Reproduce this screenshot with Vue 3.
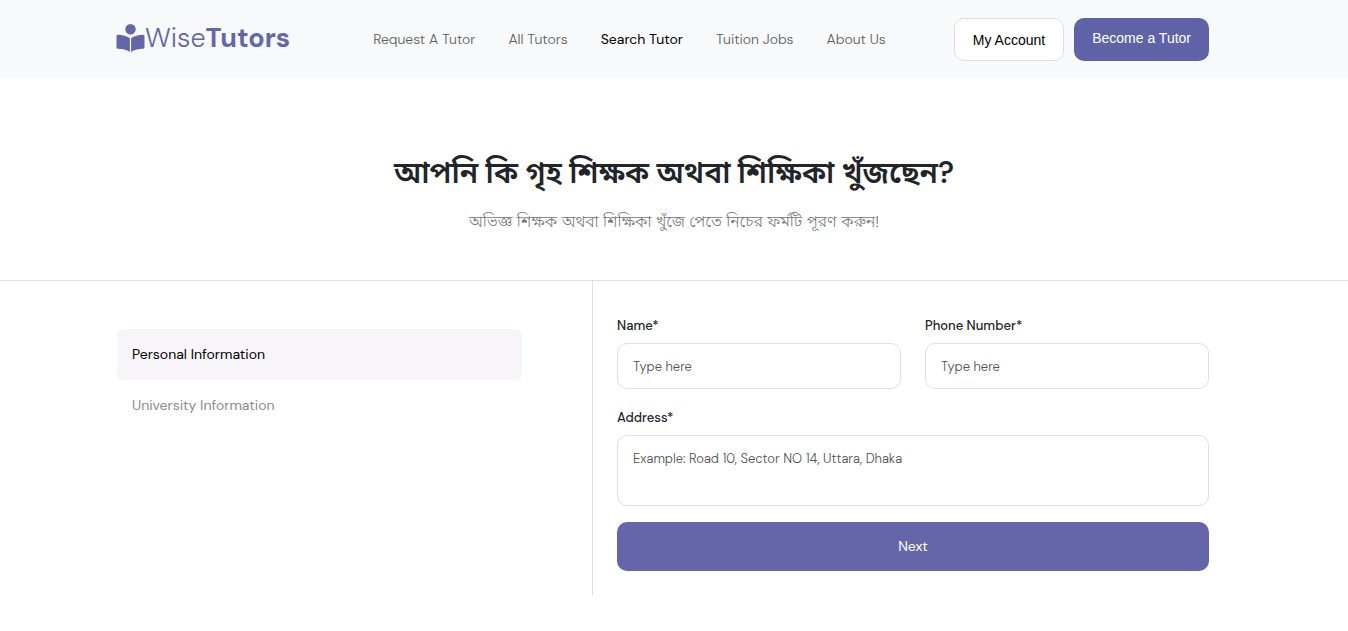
<script setup>
import { ref } from 'vue'

const links = ['Request A Tutor', 'All Tutors', 'Search Tutor', 'Tuition Jobs', 'About Us']
const current = 'Search Tutor'
const steps = ['Personal Information', 'University Information']
const step = ref(0)
const name = ref('')
const phone = ref('')
const address = ref('')
</script>

<template>
  <div class="page">
    <header class="header">
      <div class="container bar">
        <a href="#" class="logo" aria-label="WiseTutors">
          <svg class="mark" viewBox="0 0 28 28" aria-hidden="true">
            <circle cx="14" cy="5.2" r="5.2" />
            <path d="M0 12.2Q0 10.6 1.4 10.7Q8.6 11 13.4 14.2V28Q8.4 24.9 1.3 24.8Q0 24.7 0 23.4Z" />
            <path d="M28 12.2Q28 10.6 26.6 10.7Q19.4 11 14.6 14.2V28Q19.6 24.9 26.7 24.8Q28 24.7 28 23.4Z" />
          </svg>
          <span class="word"><span>Wise</span><b>Tutors</b></span>
        </a>
        <nav class="nav">
          <a v-for="l in links" :key="l" href="#" :class="{ active: l === current }">{{ l }}</a>
        </nav>
        <div class="actions">
          <button type="button" class="account">My Account</button>
          <button type="button" class="become">Become a Tutor</button>
        </div>
      </div>
    </header>

    <section class="hero">
      <h1>আপনি কি গৃহ শিক্ষক অথবা শিক্ষিকা খুঁজছেন?</h1>
      <p>অভিজ্ঞ শিক্ষক অথবা শিক্ষিকা খুঁজে পেতে নিচের ফর্মটি পূরণ করুন!</p>
    </section>

    <main class="main">
      <div class="container columns">
        <aside class="steps">
          <button v-for="(s, i) in steps" :key="s" type="button" :class="{ on: i === step }" @click="step = i">{{ s }}</button>
        </aside>
        <form class="form" @submit.prevent>
          <div class="pair">
            <div class="field">
              <label for="name">Name*</label>
              <input id="name" v-model="name" type="text" placeholder="Type here" />
            </div>
            <div class="field">
              <label for="phone">Phone Number*</label>
              <input id="phone" v-model="phone" type="tel" placeholder="Type here" />
            </div>
          </div>
          <div class="field last">
            <label for="address">Address*</label>
            <textarea id="address" v-model="address" placeholder="Example: Road 10, Sector NO 14, Uttara, Dhaka"></textarea>
          </div>
          <button type="submit" class="next">Next</button>
        </form>
      </div>
    </main>
  </div>
</template>

<style>
body {
  margin: 0;
  background: #fff;
}
</style>

<style scoped>
.page,
.page * {
  box-sizing: border-box;
}
.page {
  font-family: "DM Sans", Inter, "Noto Sans Bengali", sans-serif;
  font-size: 14px;
  line-height: 20px;
  color: #212529;
}
.container {
  max-width: 1140px;
  margin: 0 auto;
  padding: 0 12px;
}
button {
  font: inherit;
  border: 0;
  cursor: pointer;
}
a {
  text-decoration: none;
}
.header {
  background: #f8f9fb;
}
.bar {
  display: flex;
  align-items: center;
  padding: 18px 35px 18px 12px;
}
.logo {
  display: flex;
  align-items: center;
  color: #6566a9;
  padding-bottom: 4px;
}
.mark {
  width: 29px;
  height: 28px;
  fill: currentColor;
}
.word {
  font-size: 27px;
  line-height: 32px;
  font-weight: 300;
}
.word b {
  font-weight: 700;
}
.nav {
  display: flex;
  gap: 33px;
  margin: 0 auto 0 83px;
  padding-bottom: 2px;
}
.nav a {
  color: #5c5c5c;
  font-weight: 300;
  white-space: nowrap;
}
.nav a.active {
  color: #000;
  font-weight: 400;
}
.actions {
  display: flex;
  gap: 10px;
  font-family: "Liberation Sans", Arial, sans-serif;
  white-space: nowrap;
}
.actions button {
  height: 43px;
  padding: 0 18px;
  border-radius: 10px;
}
.actions .account {
  background: #fff;
  border: 1px solid #dedfe1;
  color: #000;
}
.actions .become {
  background: #6062a8;
  color: #fff;
  padding-bottom: 3px;
}
.hero {
  text-align: center;
  padding: 74px 12px 46px;
  border-bottom: 1px solid #dfdfe1;
}
h1 {
  margin: 0 0 16px;
  font-size: 30px;
  line-height: 40px;
  font-weight: 600;
}
.hero p {
  margin: 0;
  font-size: 16px;
  line-height: 25px;
  font-weight: 300;
  color: #757575;
}
.columns {
  display: grid;
  grid-template-columns: 476fr 640fr;
}
.steps {
  padding: 48px 70px 0 1px;
}
.steps button {
  display: block;
  width: 100%;
  height: 51px;
  padding: 0 15px 2px;
  text-align: left;
  background: none;
  border-radius: 6px;
  color: #8c8c8c;
}
.steps button.on {
  background: #f7f5fa;
  color: #000;
}
.form {
  border-left: 1px solid #dfdfe1;
  padding: 35px 23px 24px 24px;
}
.pair {
  display: grid;
  grid-template-columns: 1fr 1fr;
  gap: 24px;
}
.field {
  display: flex;
  flex-direction: column;
  gap: 7px;
  margin-bottom: 19px;
}
.field.last {
  margin-bottom: 16px;
}
.field label {
  font-size: 13px;
  font-weight: 500;
}
.field input,
.field textarea {
  width: 100%;
  font: inherit;
  font-size: 13px;
  font-weight: 300;
  color: #212529;
  background: #fff;
  border: 1px solid #dfdfe5;
  border-radius: 10px;
  padding: 13px 15px;
  outline: none;
}
.field input {
  height: 46px;
}
.field textarea {
  height: 71px;
  resize: none;
  display: block;
}
.field ::placeholder {
  color: #4c5359;
  opacity: 1;
}
.next {
  display: block;
  width: 100%;
  height: 49px;
  padding-bottom: 3px;
  border-radius: 10px;
  background: #6566a9;
  color: #fff;
}
</style>
